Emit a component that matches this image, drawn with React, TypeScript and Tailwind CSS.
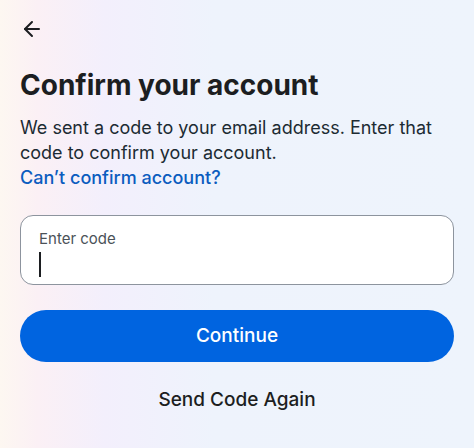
import { ArrowLeft } from 'lucide-react'

export default function App() {
  return (
    <div
      className="h-[448px] w-full overflow-hidden bg-[linear-gradient(90deg,#fdf7f1_0%,#fbf0f5_8%,#f3effc_22%,#eef3fc_45%,#eef4fc_100%)] px-5 text-[#1c2b33]"
      style={{ fontFamily: 'Inter, "Noto Sans", sans-serif' }}
    >
      {/* Back arrow */}
      <div className="pt-[17px]">
        <ArrowLeft className="h-[24px] w-[24px] text-[#1c1e21]" strokeWidth={2} />
      </div>

      {/* Heading */}
      <h1 className="mt-[26px] text-[28px] font-bold leading-[36px] text-[#1c1e21]">
        Confirm your account
      </h1>

      {/* Body text */}
      <p className="mt-[12px] text-[18px] leading-[25px]">
        We sent a code to your email address. Enter that code to confirm your account.
      </p>
      <a className="block text-[18px] font-medium leading-[25px] text-[#0b5cbf]">Can’t confirm account?</a>

      {/* Code input */}
      <div className="mt-[25px] h-[70px] rounded-[13px] border border-[#8d949e] bg-white px-[18px] pt-[13px]">
        <div className="text-[15px] leading-[20px] text-[#4b5258]">Enter code</div>
        <div className="mt-[3px] h-[25px] w-[2px] bg-[#1c1e21]" />
      </div>

      {/* Continue button */}
      <button className="mt-[25px] flex h-[52px] w-full items-center justify-center rounded-full bg-[#0064e0] text-[19px] font-medium text-white">
        Continue
      </button>

      {/* Send again */}
      <div className="mt-[26px] text-center text-[19px] font-medium leading-[24px] text-[#1c1e21]">Send Code Again</div>
    </div>
  )
}
